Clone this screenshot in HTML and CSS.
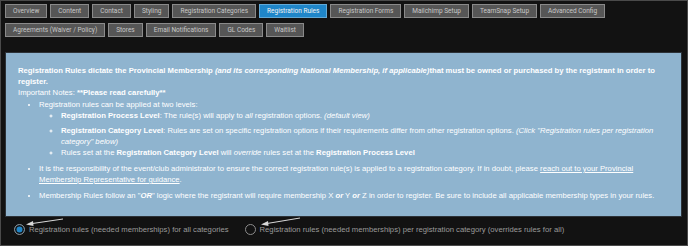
FILE: index.html
```html
<!DOCTYPE html>
<html lang="en">
<head>
    <meta charset="UTF-8">
    <title>Registration Rules</title>
    <link rel="stylesheet" href="styles.css">
</head>
<body>
    <div class="frame">
        <div class="tabs">
            <div class="tab-row">
                <span class="tab">Overview</span>
                <span class="tab">Content</span>
                <span class="tab">Contact</span>
                <span class="tab">Styling</span>
                <span class="tab">Registration Categories</span>
                <span class="tab active">Registration Rules</span>
                <span class="tab">Registration Forms</span>
                <span class="tab">Mailchimp Setup</span>
                <span class="tab">TeamSnap Setup</span>
                <span class="tab">Advanced Config</span>
            </div>
            <div class="tab-row">
                <span class="tab">Agreements (Waiver / Policy)</span>
                <span class="tab">Stores</span>
                <span class="tab">Email Notifications</span>
                <span class="tab">GL Codes</span>
                <span class="tab">Waitlist</span>
            </div>
        </div>

        <div class="info">
            <p class="lead"><b>Registration Rules dictate the Provincial Membership <i>(and its corresponding National Membership, if applicable)</i>that must be owned or purchased by the registrant in order to register.</b></p>
            <p>Important Notes: <b>**Please read carefully**</b></p>
            <ul class="rules">
                <li>Registration rules can be applied at two levels:
                    <ul class="levels">
                        <li class="first"><b>Registration Process Level</b>: The rule(s) will apply to <i>all</i> registration options. <i>(default view)</i></li>
                        <li><b>Registration Category Level</b>: Rules are set on specific registration options if their requirements differ from other registration options. <i>(Click "Registration rules per registration category" below)</i></li>
                        <li>Rules set at the <b>Registration Category Level</b> will <i>override</i> rules set at the <b>Registration Process Level</b></li>
                    </ul>
                </li>
                <li>It is the responsibility of the event/club administrator to ensure the correct registration rule(s) is applied to a registration category. If in doubt, please <a href="#">reach out to your Provincial Membership Representative for guidance</a>.</li>
                <li>Membership Rules follow an "<b><i>OR</i></b>" logic where the registrant will require membership X <b><i>or</i></b> Y <b><i>or</i></b> Z in order to register. Be sure to include all applicable membership types in your rules.</li>
            </ul>
        </div>

        <div class="choices">
            <label class="choice"><span class="radio checked"></span>Registration rules (needed memberships) for all categories</label>
            <label class="choice"><span class="radio"></span>Registration rules (needed memberships) per registration category (overrides rules for all)</label>
        </div>

        <svg class="arrows" width="688" height="246" viewBox="0 0 688 246">
            <g stroke="#d8d8d8" stroke-width="1" fill="#d8d8d8">
                <line x1="63" y1="219" x2="29" y2="224"/>
                <polygon points="26,224.5 33,221 33.5,226" stroke="none"/>
                <line x1="300" y1="218" x2="264" y2="224"/>
                <polygon points="261,224.5 268,221 268.5,226" stroke="none"/>
            </g>
        </svg>
    </div>
</body>
</html>
```

FILE: styles.css
```css
body {
    margin: 0;
    background-color: #121212;
    font-family: "Liberation Sans", Arial, sans-serif;
}
.frame {
    position: relative;
    box-sizing: border-box;
    width: 688px;
    height: 246px;
    border: 1px solid #4a4a4a;
    background-color: #121212;
    padding: 3px 4px 0 4px;
}
.tabs {
    display: flex;
    flex-direction: column;
    gap: 5px;
}
.tab-row {
    display: flex;
    gap: 3px;
}
.tab {
    box-sizing: border-box;
    height: 14px;
    line-height: 12px;
    padding: 0 7px;
    font-family: Roboto, sans-serif;
    font-size: 6.5px;
    color: #c8c8c8;
    background-color: #565656;
    border: 1px solid #8a8a8a;
    white-space: nowrap;
}
.tab.active {
    background-color: #1f86c9;
    border-color: #62a9d6;
    color: #f2f2f2;
}
.info {
    box-sizing: border-box;
    margin-top: 15px;
    width: 677px;
    height: 165px;
    padding: 12px 12px 0 12px;
    background-color: #8fb4cf;
    border: 1px solid #2c3238;
    color: #fff;
    font-size: 7.7px;
    line-height: 11px;
}
.info p {
    margin: 0;
}
.rules {
    margin: 1px 0 0 0;
    padding-left: 21px;
    list-style: disc;
}
.rules > li {
    margin-bottom: 5px;
}
.levels {
    margin: 0;
    padding-left: 22px;
    list-style: circle;
}
.levels .first {
    margin-bottom: 4px;
}
.info a {
    color: #fff;
}
.choices {
    display: flex;
    gap: 16px;
    margin-top: 7px;
    padding-left: 9px;
}
.choice {
    display: flex;
    align-items: center;
    gap: 4px;
    font-size: 7.7px;
    color: #9a9a9a;
}
.radio {
    box-sizing: border-box;
    width: 11px;
    height: 11px;
    border-radius: 50%;
    border: 1px solid #8c8c8c;
}
.radio.checked {
    background-color: #1f86c9;
    box-shadow: inset 0 0 0 1.5px #121212;
}
.arrows {
    position: absolute;
    left: -1px;
    top: -1px;
    pointer-events: none;
}
```
